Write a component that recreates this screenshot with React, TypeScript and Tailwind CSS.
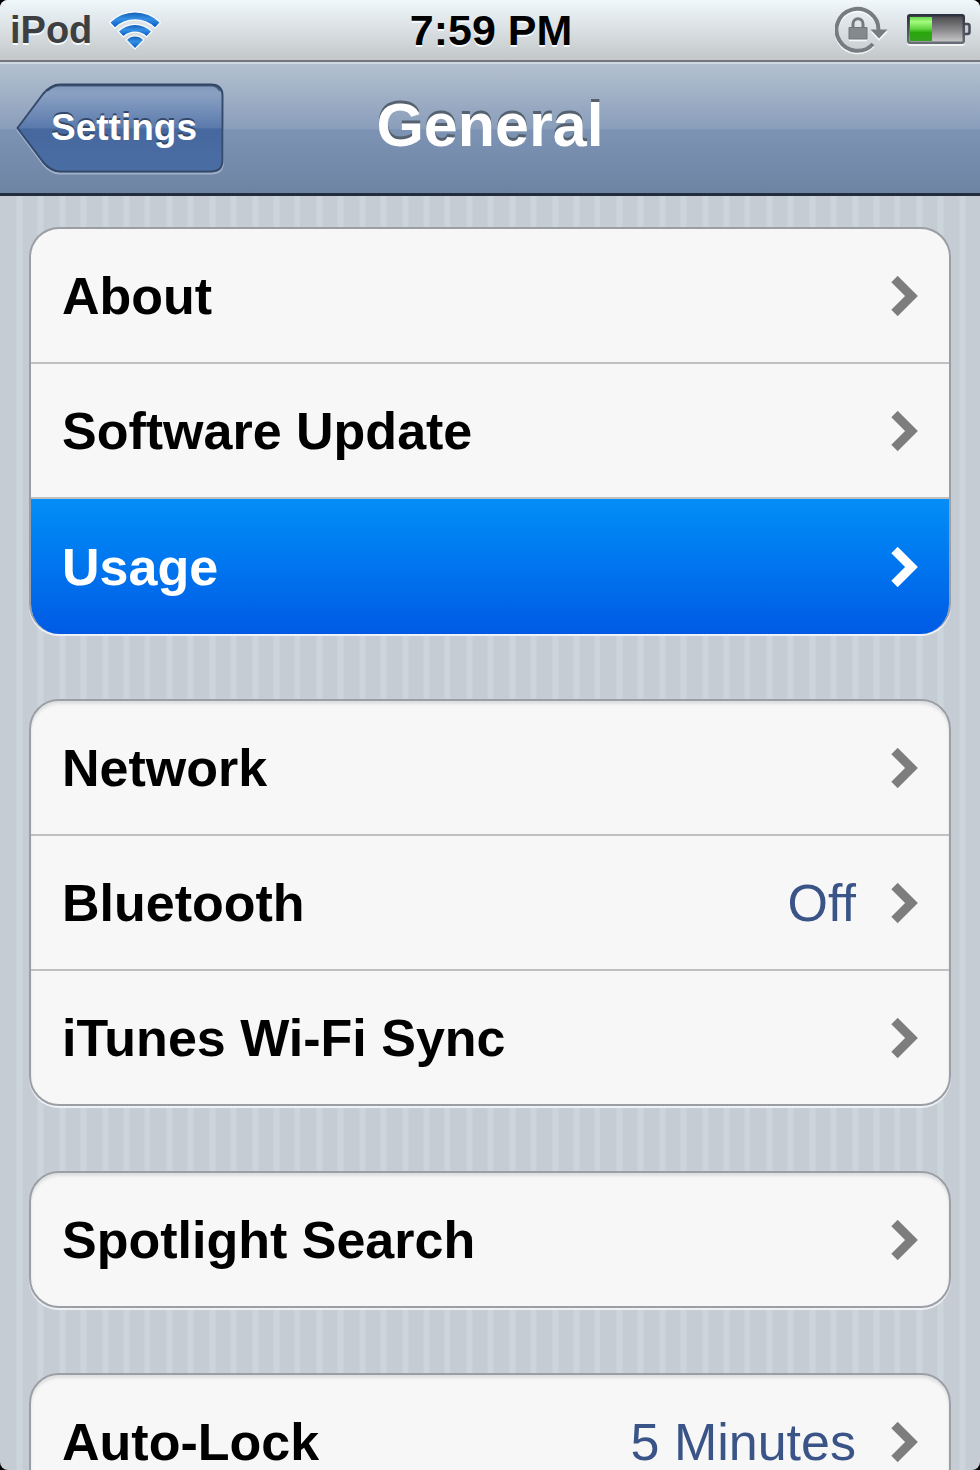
import clsx from "clsx";

interface SettingsItem {
  label: string;
  value?: string;
  selected?: boolean;
}

const groups: SettingsItem[][] = [
  [
    { label: "About" },
    { label: "Software Update" },
    { label: "Usage", selected: true },
  ],
  [
    { label: "Network" },
    { label: "Bluetooth", value: "Off" },
    { label: "iTunes Wi-Fi Sync" },
  ],
  [{ label: "Spotlight Search" }],
  [{ label: "Auto-Lock", value: "5 Minutes" }],
];

function WifiIcon() {
  return (
    <svg viewBox="0 0 52 40" className="w-[52px] h-10" aria-hidden="true">
      <defs>
        <linearGradient id="wifi" x1="0" y1="0" x2="0" y2="1">
          <stop offset="0" stopColor="#1560b8" />
          <stop offset="0.45" stopColor="#3490e4" />
          <stop offset="1" stopColor="#0a58c6" />
        </linearGradient>
      </defs>
      <g fill="url(#wifi)" stroke="#f8fdff" strokeWidth="2.500" paintOrder="stroke">
        <path d="M1.500 12.500A35 35 0 0 1 50.500 12.500L46 17.200A29 29 0 0 0 6 17.200Z" />
        <path d="M10 21.500A23 23 0 0 1 42 21.500L37.600 26A17 17 0 0 0 14.400 26Z" />
        <path d="M18 30A11 11 0 0 1 34 30L26 38Z" />
      </g>
    </svg>
  );
}

function RotationLockIcon() {
  return (
    <svg viewBox="0 0 54 50" className="w-[54px] h-[50px]" aria-hidden="true">
      <path
        d="M38 40.500A21 21 0 1 1 43.500 27"
        fill="none"
        stroke="#fff"
        strokeOpacity="0.8"
        strokeWidth="4"
      />
      <path d="M35.500 26.500H53L44 36Z" fill="#fff" fillOpacity="0.8" />
      <path
        d="M38 39A21 21 0 1 1 43.500 25"
        fill="none"
        stroke="#777c80"
        strokeWidth="4"
      />
      <path d="M35.500 24.500H52.500L44 33.500Z" fill="#777c80" />
      <path
        d="M18 23V19C18 12 28 12 28 19V23"
        fill="none"
        stroke="#74797d"
        strokeWidth="3"
      />
      <path d="M14 22.500H32V34H14Z" fill="#83898c" stroke="#6f7579" strokeWidth="1" />
      <path d="M14 35.500H32" stroke="#fff" strokeOpacity="0.8" strokeWidth="1.500" />
    </svg>
  );
}

function BatteryIcon() {
  return (
    <svg viewBox="0 0 65 32" className="w-[65px] h-8" aria-hidden="true">
      <defs>
        <linearGradient id="charge" x1="0" y1="0" x2="0" y2="1">
          <stop offset="0" stopColor="#69d94c" />
          <stop offset="0.2" stopColor="#a4fb7d" />
          <stop offset="0.5" stopColor="#5fd33e" />
          <stop offset="0.65" stopColor="#28a60c" />
          <stop offset="1" stopColor="#36a01f" />
        </linearGradient>
        <linearGradient id="empty" x1="0" y1="0" x2="0" y2="1">
          <stop offset="0" stopColor="#4c4c50" />
          <stop offset="0.5" stopColor="#858588" />
          <stop offset="1" stopColor="#c6c6c7" />
        </linearGradient>
        <linearGradient id="shell" x1="0" y1="0" x2="0" y2="1">
          <stop offset="0" stopColor="#2b303e" />
          <stop offset="1" stopColor="#6a6e79" />
        </linearGradient>
      </defs>
      <rect x="0" y="2" width="58" height="30" rx="3" fill="#fff" fillOpacity="0.7" />
      <rect x="0" y="0" width="58" height="30" rx="3" fill="url(#shell)" />
      <rect x="2.500" y="2.500" width="53" height="25" fill="url(#empty)" />
      <rect x="3" y="3" width="22" height="24" fill="url(#charge)" />
      <path
        d="M58 10H60.500Q62.500 10 62.500 12V18Q62.500 20 60.500 20H58"
        fill="#c8cbcf"
        stroke="#474b58"
        strokeWidth="2.500"
      />
    </svg>
  );
}

function BackButtonShape() {
  return (
    <svg
      viewBox="0 0 208 92"
      className="absolute inset-0 w-full h-full"
      preserveAspectRatio="none"
      aria-hidden="true"
    >
      <defs>
        <linearGradient id="back" x1="0" y1="0" x2="0" y2="1">
          <stop offset="0" stopColor="#7f97bb" />
          <stop offset="0.1" stopColor="#8ba1c3" />
          <stop offset="0.5" stopColor="#5a7aac" />
          <stop offset="0.51" stopColor="#46689e" />
          <stop offset="1" stopColor="#4a6da3" />
        </linearGradient>
      </defs>
      <path
        d="M1.500 47L27 13Q35 3 44 3H195Q207 3 207 15V79Q207 90.500 195 90.500H44Q35 90.500 27 81Z"
        fill="none"
        stroke="#a0b1ca"
        strokeWidth="2"
      />
      <path
        d="M1.500 45L27 11Q35 1.500 44 1.500H195Q206.500 1.500 206.500 13V77Q206.500 88.500 195 88.500H44Q35 88.500 27 79Z"
        fill="url(#back)"
        stroke="#354a6b"
        strokeWidth="2"
      />
      <path
        d="M31 8Q37 2.500 44 2.500H195Q201 2.500 204 8"
        fill="none"
        stroke="#263853"
        strokeOpacity="0.6"
        strokeWidth="2"
      />
    </svg>
  );
}

function Chevron({ selected }: { selected?: boolean }) {
  return (
    <svg viewBox="0 0 28 40" className="w-7 h-10 shrink-0" aria-hidden="true">
      <path
        d="M3.500 3L20.500 20L3.500 37"
        fill="none"
        stroke={selected ? "#ffffff" : "#7d7d7d"}
        strokeWidth="9"
      />
    </svg>
  );
}

function SettingsRow({ label, value, selected }: SettingsItem) {
  return (
    <a
      href="#"
      className={clsx(
        "flex items-center pl-[31px] pr-[30px] text-[52px]",
        selected
          ? "h-[135px] bg-linear-to-b from-[#068ef7] to-[#005ae5] text-white"
          : "h-[133px] text-black"
      )}
    >
      <span className="flex-1 font-bold whitespace-nowrap">{label}</span>
      {value && <span className="mr-[35px] text-[#3a5487]">{value}</span>}
      <Chevron selected={selected} />
    </a>
  );
}

function SettingsGroup({ items }: { items: SettingsItem[] }) {
  return (
    <ul
      className={clsx(
        "overflow-hidden rounded-[30px] border-2 border-[#9b9fa5] bg-[#f7f7f7] divide-y-2 divide-[#bfc0c2] shadow-[0_2px_0_#eef2f6]",
        items[items.length - 1].selected
          ? "border-b-0"
          : "inset-shadow-[0_3px_3px_#dedfe1]"
      )}
    >
      {items.map((item) => (
        <li key={item.label}>
          <SettingsRow {...item} />
        </li>
      ))}
    </ul>
  );
}

export default function App() {
  return (
    <div className="h-screen bg-black font-['Liberation_Sans',Arial,sans-serif]">
      <div className="flex flex-col h-full overflow-hidden rounded-lg bg-[#c5ccd4]">
        {/* Status bar */}
        <div className="grid grid-cols-[1fr_auto_1fr] items-center h-[62px] shrink-0 pl-2.5 pr-2 border-b-2 border-[#73767f] bg-linear-to-b from-[#f0f8fb] to-[#c3c7ca] leading-none">
          <div className="flex items-center gap-[17px]">
            <span className="text-[38px] font-bold text-[#3d4042] [text-shadow:0_2px_0_#f5fafc]">
              iPod
            </span>
            <WifiIcon />
          </div>
          <span className="text-[43px] font-bold text-black [text-shadow:0_2px_0_#f5fafc]">
            7:59 PM
          </span>
          <div className="flex items-center justify-end gap-[18px]">
            <RotationLockIcon />
            <BatteryIcon />
          </div>
        </div>

        {/* Navigation bar */}
        <header className="grid grid-cols-[1fr_auto_1fr] items-center h-[134px] shrink-0 px-4 border-t-2 border-t-[#d0d8e1] border-b-3 border-b-[#222d40] bg-[linear-gradient(#b3c0cf,#8a9ebb_50%,#7c93b4_51%,#6e84a3)]">
          <button
            type="button"
            className="relative w-52 h-[92px] pl-2 pb-0.5 text-[37px] font-bold text-white [text-shadow:0_-2px_0_#34486a]"
          >
            <BackButtonShape />
            <span className="relative">Settings</span>
          </button>
          <h1 className="pb-1.5 text-[61px] leading-none font-bold text-white [text-shadow:0_-3px_0_#56616f]">
            General
          </h1>
        </header>

        {/* Settings list on pinstripes, seven stripes to a tile */}
        <main className="flex flex-col flex-1 min-h-0 overflow-hidden gap-[65px] px-[29px] pt-[31px] bg-[length:150px_100%] bg-[linear-gradient(90deg,transparent_16px,#ccd4dc_17px_22px,transparent_23px_37px,#ccd4dc_38px_43px,transparent_44px_59px,#ccd4dc_60px_65px,transparent_66px_80px,#ccd4dc_81px_86px,transparent_87px_102px,#ccd4dc_103px_108px,transparent_109px_123px,#ccd4dc_124px_129px,transparent_130px_144px,#ccd4dc_145px_150px)]">
          {groups.map((items) => (
            <div key={items[0].label} className="shrink-0">
              <SettingsGroup items={items} />
            </div>
          ))}
        </main>
      </div>
    </div>
  );
}
